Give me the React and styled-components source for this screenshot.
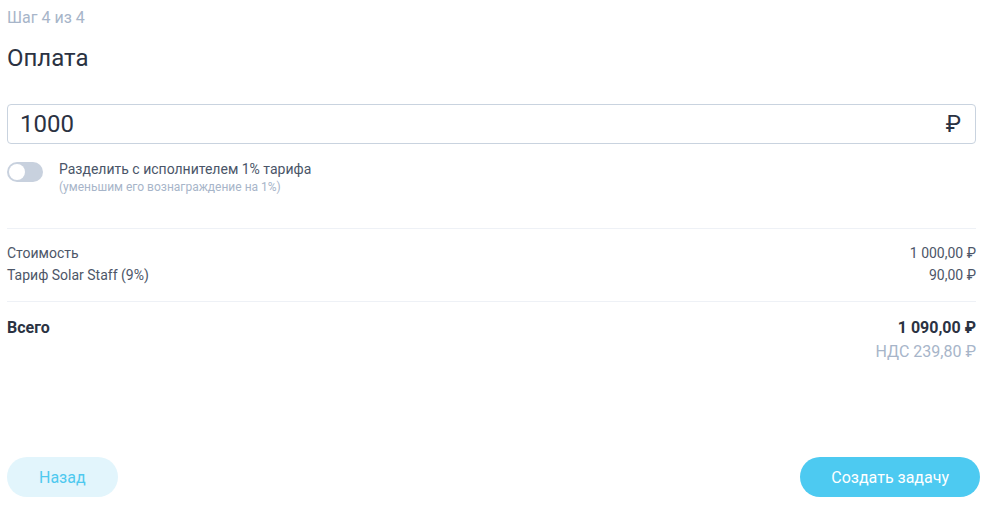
import React from "react";
import styled, { createGlobalStyle } from "styled-components";

const Global = createGlobalStyle`
  html, body { margin: 0; padding: 0; background: #fff; }
  body { font-family: Roboto, "Noto Sans", sans-serif; color: #2b3445; }
  * { box-sizing: border-box; }
`;

const Page = styled.div`
  width: 992px;
  height: 517px;
  padding: 8px 12px 0 7px;
  display: flex;
  flex-direction: column;
`;

const Form = styled.section`
  margin-right: 4px;
  display: flex;
  flex-direction: column;
`;

const Step = styled.div`
  font-size: 16px;
  line-height: 20px;
  color: #a7b5c9;
`;

const Title = styled.h1`
  margin: 15px 0 0;
  font-size: 24px;
  line-height: 30px;
  font-weight: 400;
  color: #2b3242;
`;

const InputBox = styled.div`
  margin-top: 31px;
  height: 40px;
  border: 1px solid #c9d3df;
  border-radius: 4px;
  display: flex;
  align-items: center;
  justify-content: space-between;
  padding: 0 14px 0 12px;
`;

const Amount = styled.span`
  font-size: 24px;
  color: #2b3242;
`;

const Currency = styled.span`
  font-size: 23px;
  color: #2b3242;
`;

const ToggleRow = styled.div`
  margin-top: 15px;
  display: flex;
  align-items: flex-start;
  gap: 16px;
`;

const Switch = styled.div`
  margin-top: 3px;
  width: 36px;
  height: 20px;
  border-radius: 10px;
  background: #c8d1de;
  position: relative;
  flex-shrink: 0;
  &::after {
    content: "";
    position: absolute;
    left: 2px;
    top: 2px;
    width: 16px;
    height: 16px;
    border-radius: 50%;
    background: #fff;
  }
`;

const ToggleText = styled.div`
  display: flex;
  flex-direction: column;
`;

const ToggleLabel = styled.div`
  font-size: 14px;
  line-height: 20px;
  color: #4a5568;
`;

const ToggleHint = styled.div`
  font-size: 12px;
  line-height: 16px;
  color: #a7b5c9;
`;

const Divider = styled.hr`
  margin: ${(p) => p.$top}px 0 0;
  border: 0;
  border-top: 1px solid #eef1f6;
  height: 0;
`;

const Rows = styled.div`
  margin-top: ${(p) => p.$top}px;
  display: flex;
  flex-direction: column;
`;

const Row = styled.div`
  display: flex;
  justify-content: space-between;
  font-size: 14px;
  line-height: 22px;
  color: #4d5668;
`;

const TotalRow = styled.div`
  display: flex;
  justify-content: space-between;
  font-size: 16px;
  line-height: 24px;
  font-weight: 700;
  color: #2b3242;
`;

const Vat = styled.div`
  align-self: flex-end;
  font-size: 16px;
  line-height: 24px;
  color: #a7b5c9;
`;

const Footer = styled.div`
  margin-top: auto;
  margin-bottom: 20px;
  display: flex;
  justify-content: space-between;
`;

const Button = styled.button`
  height: 40px;
  border: 0;
  border-radius: 20px;
  font-family: Roboto, sans-serif;
  font-size: 16px;
  padding: 0 ${(p) => (p.$primary ? 31 : 32)}px;
  background: ${(p) => (p.$primary ? "#4dcaf1" : "#e2f5fc")};
  color: ${(p) => (p.$primary ? "#fff" : "#4ec9ef")};
  cursor: pointer;
`;

export default function App() {
  return (
    <>
      <Global />
      <Page>
        <Form>
          <Step>Шаг 4 из 4</Step>
          <Title>Оплата</Title>
          <InputBox>
            <Amount>1000</Amount>
            <Currency>₽</Currency>
          </InputBox>
          <ToggleRow>
            <Switch />
            <ToggleText>
              <ToggleLabel>Разделить с исполнителем 1% тарифа</ToggleLabel>
              <ToggleHint>(уменьшим его вознаграждение на 1%)</ToggleHint>
            </ToggleText>
          </ToggleRow>
          <Divider $top={33} />
          <Rows $top={13}>
            <Row>
              <span>Стоимость</span>
              <span>1 000,00 ₽</span>
            </Row>
            <Row>
              <span>Тариф Solar Staff (9%)</span>
              <span>90,00 ₽</span>
            </Row>
          </Rows>
          <Divider $top={15} />
          <Rows $top={14}>
            <TotalRow>
              <span>Всего</span>
              <span>1 090,00 ₽</span>
            </TotalRow>
            <Vat>НДС 239,80 ₽</Vat>
          </Rows>
        </Form>
        <Footer>
          <Button>Назад</Button>
          <Button $primary>Создать задачу</Button>
        </Footer>
      </Page>
    </>
  );
}
